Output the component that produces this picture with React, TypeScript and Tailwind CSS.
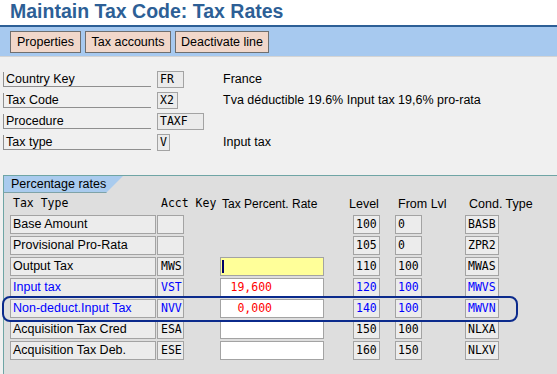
import React from 'react';

const sans = "font-['Liberation_Sans',Arial,sans-serif]";
const mono = "font-['DejaVu_Sans_Mono',monospace]";

const headFields = [
  { label: 'Country Key', value: 'FR', width: 'w-[27px]', desc: 'France' },
  { label: 'Tax Code', value: 'X2', width: 'w-[21px]', desc: 'Tva déductible 19.6% Input tax 19,6% pro-rata' },
  { label: 'Procedure', value: 'TAXF', width: 'w-[47px]', desc: '' },
  { label: 'Tax type', value: 'V', width: 'w-[13px]', desc: 'Input tax' },
];

type RateRow = {
  name: string;
  acct: string;
  rate?: string;
  rateField: 'none' | 'yellow' | 'white';
  level: string;
  from: string;
  cond: string;
  blue?: boolean;
};

const rows: RateRow[] = [
  { name: 'Base Amount', acct: '', rateField: 'none', level: '100', from: '0', cond: 'BASB' },
  { name: 'Provisional Pro-Rata', acct: '', rateField: 'none', level: '105', from: '0', cond: 'ZPR2' },
  { name: 'Output Tax', acct: 'MWS', rateField: 'yellow', level: '110', from: '100', cond: 'MWAS' },
  { name: 'Input tax', acct: 'VST', rate: '19,600', rateField: 'white', level: '120', from: '100', cond: 'MWVS', blue: true },
  { name: 'Non-deduct.Input Tax', acct: 'NVV', rate: '0,000', rateField: 'white', level: '140', from: '100', cond: 'MWVN', blue: true },
  { name: 'Acquisition Tax Cred', acct: 'ESA', rateField: 'white', level: '150', from: '100', cond: 'NLXA' },
  { name: 'Acquisition Tax Deb.', acct: 'ESE', rateField: 'white', level: '160', from: '150', cond: 'NLXV' },
];

const boxClass = 'h-[19px] border border-[#a3a3a3] bg-[#ececec] flex items-center';

function RateLine({ row }: { row: RateRow }) {
  const tone = row.blue ? 'text-[#0000ff]' : 'text-black';
  return (
    <div className="flex items-center pl-[6px]">
      <div className={`${boxClass} w-[146px] pl-[2px] text-[12.5px] ${sans} ${tone}`}>{row.name}</div>
      <div className={`${boxClass} ml-[1px] w-[27px] pl-[3px] text-[11.5px] ${mono} ${tone}`}>{row.acct}</div>
      {row.rateField === 'none' ? (
        <div className="ml-[36px] w-[104px]" />
      ) : (
        <div
          className={`ml-[36px] w-[104px] h-[19px] border border-[#a3a3a3] flex items-center ${
            row.rateField === 'yellow' ? 'bg-[#ffff99] pl-[1px]' : 'bg-white justify-end pr-[51px]'
          }`}
        >
          {row.rateField === 'yellow' ? (
            <span className="w-[2px] h-[13px] bg-[#000066]" />
          ) : (
            <span className={`text-[11.5px] text-[#ff0000] ${mono}`}>{row.rate}</span>
          )}
        </div>
      )}
      <div className={`${boxClass} ml-[29px] w-[27px] pl-[2px] text-[11.5px] ${mono} ${tone}`}>{row.level}</div>
      <div className={`${boxClass} ml-[15px] w-[27px] pl-[2px] text-[11.5px] ${mono} ${tone}`}>{row.from}</div>
      <div className={`${boxClass} ml-[43px] w-[34px] pl-[2px] text-[11.5px] ${mono} ${tone}`}>{row.cond}</div>
    </div>
  );
}

export default function App() {
  return (
    <div className={`relative w-[557px] h-[374px] overflow-hidden bg-[#f0f0f0] text-black ${sans}`}>
      {/* title */}
      <div className="h-[27px] bg-white border-b-2 border-[#2d5f96] pl-[10px] flex items-center">
        <h1 className="text-[19.5px] font-bold leading-none text-[#2d5f96] -mt-[2px]">Maintain Tax Code: Tax Rates</h1>
      </div>

      {/* toolbar */}
      <div className="h-[30px] bg-[#a7c9ef] border-b border-[#d4d4d4] pl-[10px] flex items-center gap-[4px] pt-[1px]">
        {[
          ['Properties', 'w-[71px]'],
          ['Tax accounts', 'w-[86px]'],
          ['Deactivate line', 'w-[94px]'],
        ].map(([label, w]) => (
          <button
            key={label}
            type="button"
            className={`${w} h-[22px] border border-[#6f6f6f] bg-[#f1d7ca] text-[12.5px] text-black flex items-center justify-center`}
          >
            {label}
          </button>
        ))}
      </div>

      {/* header fields */}
      <div className="mt-[12px] flex flex-col">
        {headFields.map((f) => (
          <div key={f.label} className="h-[21px] flex items-center">
            <div className="ml-[3px] w-[148px] h-[15px] border-l border-b border-[#8f8f8f] pl-[2px] flex items-center text-[12.5px]">
              {f.label}
            </div>
            <div
              className={`ml-[6px] ${f.width} h-[17px] border border-[#a3a3a3] bg-[#ebebeb] pl-[2px] flex items-center text-[11.5px] ${mono}`}
            >
              {f.value}
            </div>
            <div className="absolute left-[223px] text-[12.5px]">{f.desc}</div>
          </div>
        ))}
      </div>

      {/* percentage rates panel */}
      <div className="mt-[22px] ml-[3px] h-[200px] border-t border-l border-[#6fa5a5] bg-[#dedede]">
        <div className="w-[119px] h-[17px] bg-[#a9cbee] border-b border-[#7fa3a8] pl-[7px] flex items-center text-[12.5px] [clip-path:polygon(0_0,100%_0,calc(100%-17px)_100%,0_100%)]">
          Percentage rates
        </div>

        <div className="h-[22px] flex items-center pl-[6px] whitespace-nowrap">
          <div className={`w-[147px] pl-[3px] text-[11.5px] ${mono}`}>Tax Type</div>
          <div className={`w-[63px] pl-[4px] text-[11.5px] ${mono}`}>Acct Key</div>
          <div className="w-[125px] pl-[2px] text-[12px]">Tax Percent. Rate</div>
          <div className="w-[50px] pl-[4px] text-[12.5px]">Level</div>
          <div className="w-[70px] pl-[3px] text-[12.5px]">From Lvl</div>
          <div className="pl-[4px] text-[12.5px]">Cond. Type</div>
        </div>

        <div className="flex flex-col gap-[2px]">
          {rows.map((r) => (
            <RateLine key={r.name} row={r} />
          ))}
        </div>
      </div>

      {/* highlight around the Non-deduct row */}
      <div className="absolute left-[2px] top-[296px] w-[516px] h-[26px] border-2 border-[#0b2a8c] rounded-[8px] pointer-events-none" />
    </div>
  );
}
